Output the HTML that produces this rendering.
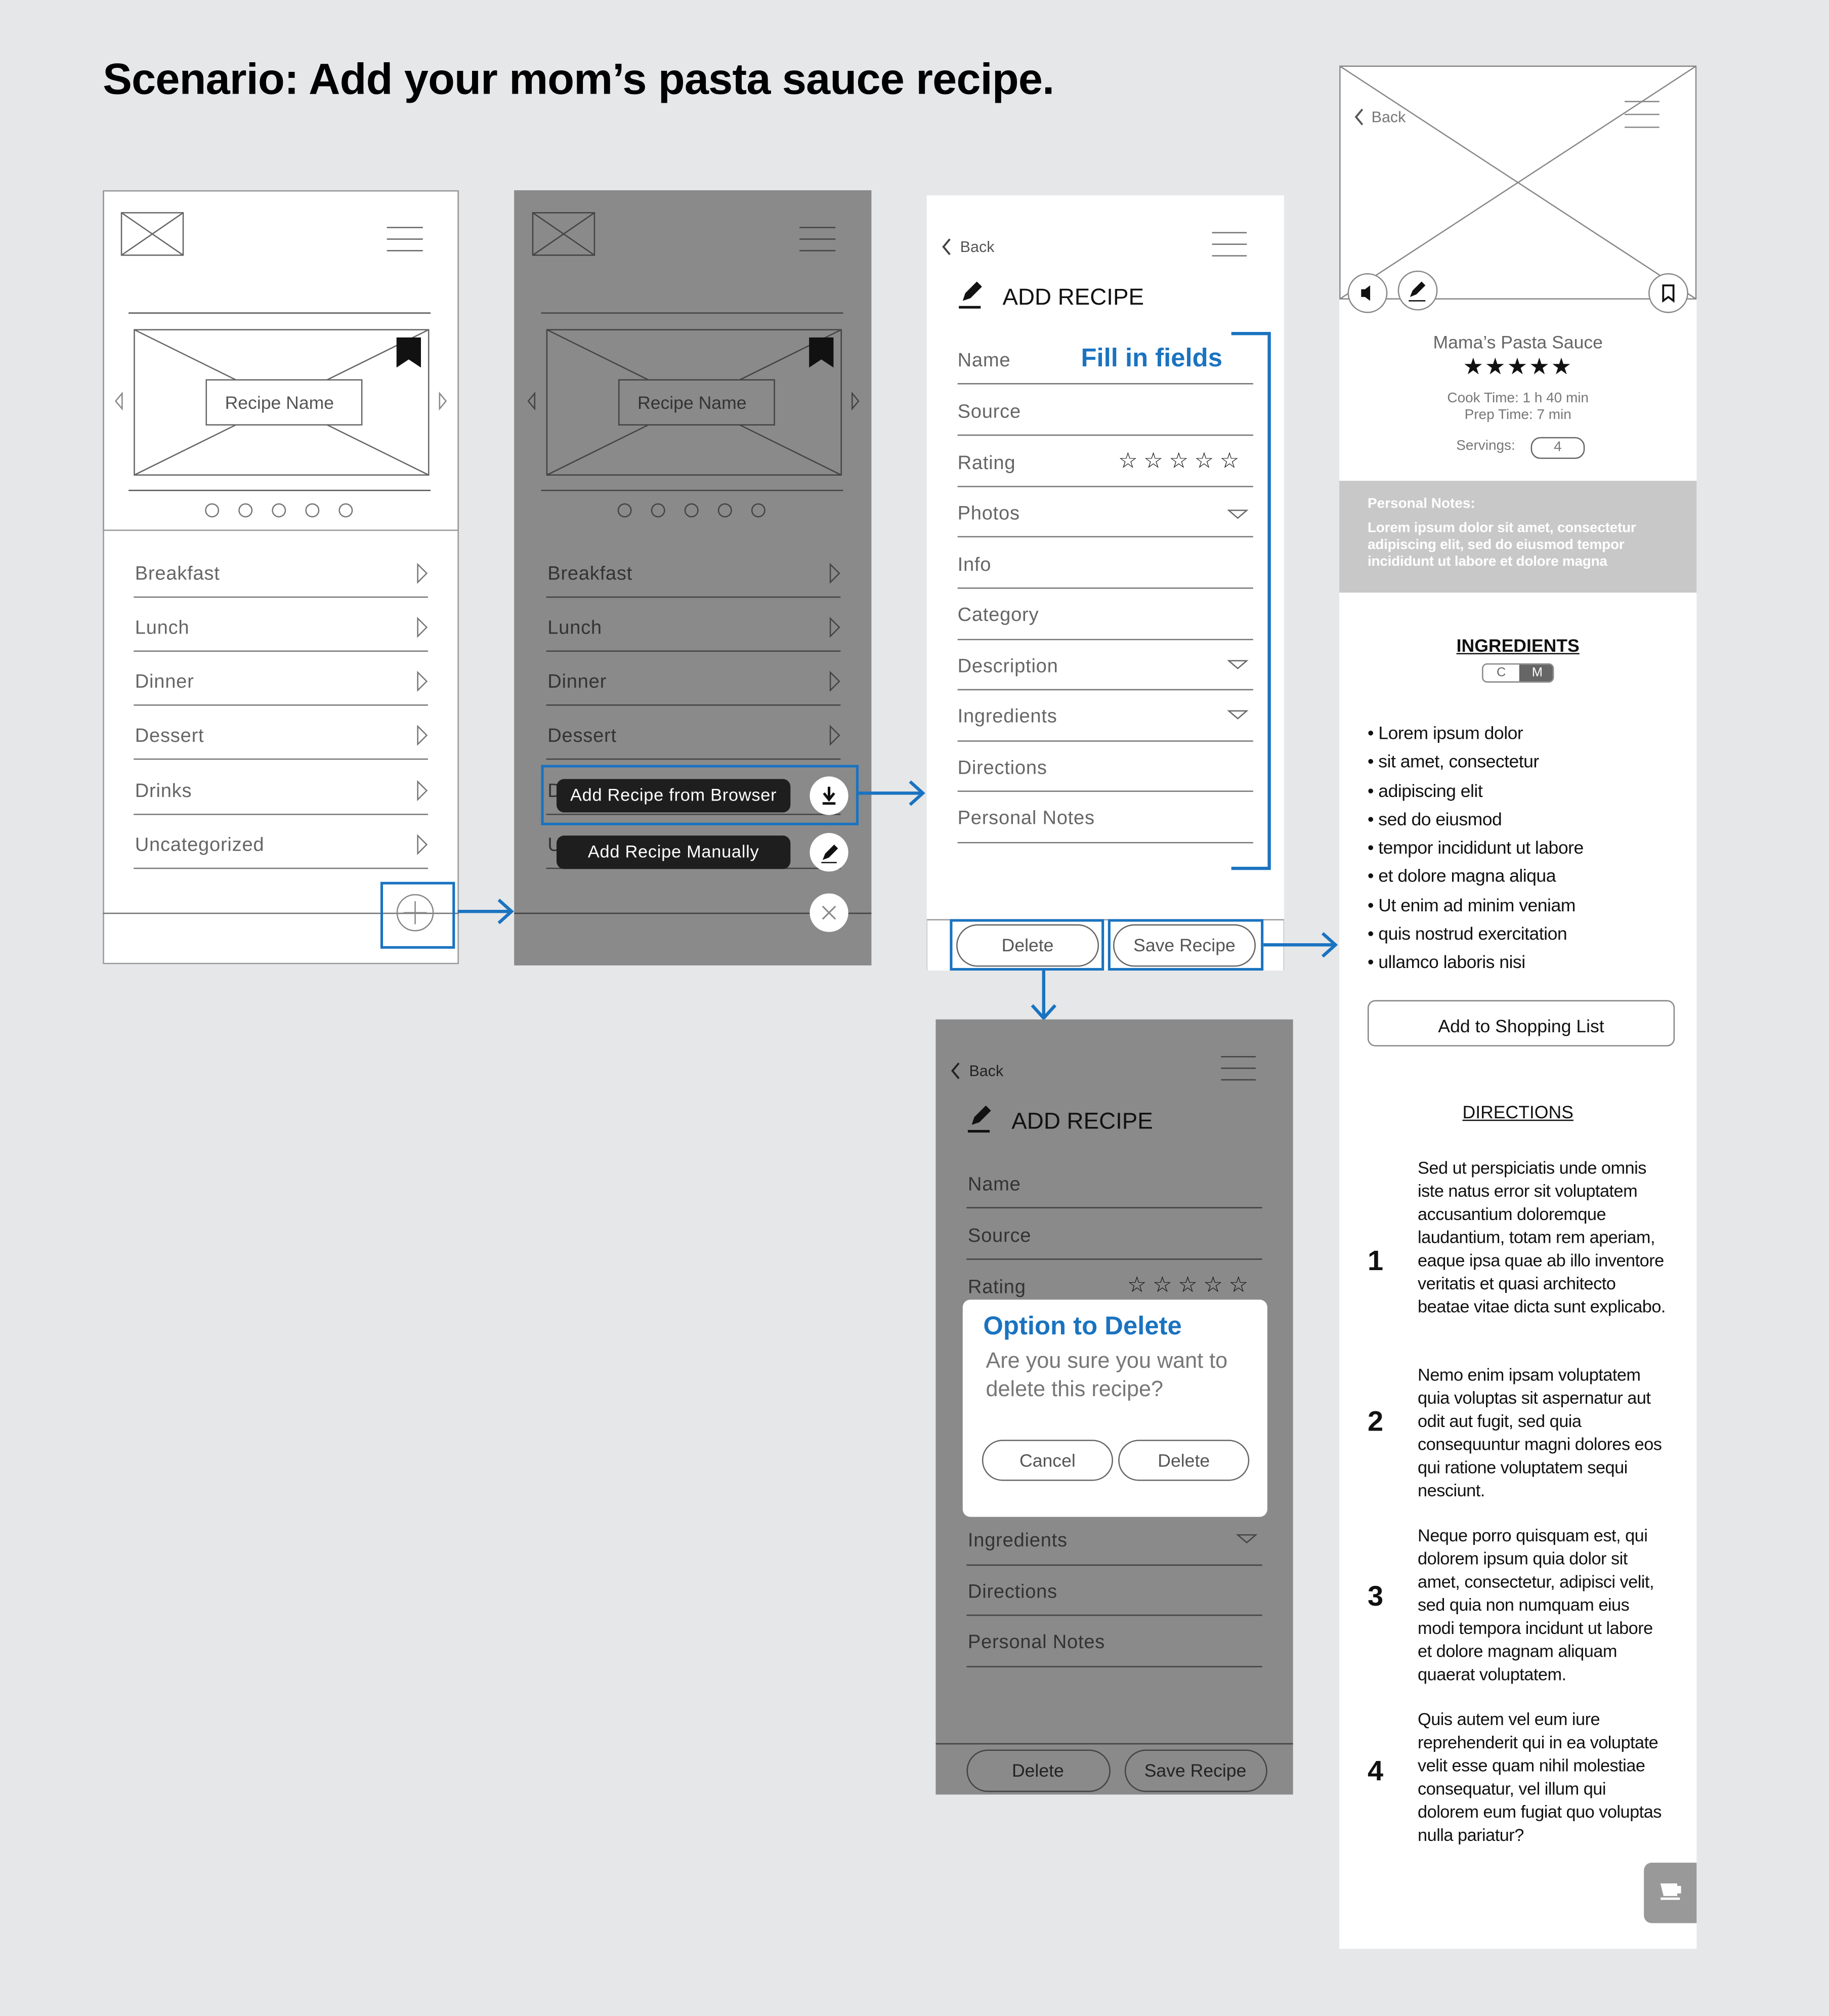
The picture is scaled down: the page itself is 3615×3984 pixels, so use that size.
<!DOCTYPE html>
<html><head><meta charset="utf-8">
<style>
html,body{margin:0;padding:0;background:#e6e7e9;}
body{width:3615px;height:3984px;overflow:hidden;position:relative;}
#w{position:absolute;left:0;top:0;width:1423px;height:1568px;transform:scale(2.5404);transform-origin:0 0;font-family:"Liberation Sans",Arial,sans-serif;}
.a{position:absolute;}
.t{position:absolute;white-space:nowrap;line-height:1;}
.lbl{position:absolute;font-size:15px;color:#666;white-space:nowrap;line-height:1;letter-spacing:.3px}
.pill{position:absolute;border:1px solid #666;border-radius:17px;text-align:center;font-size:14px;color:#555;box-sizing:border-box;}
.blue{position:absolute;border:2.5px solid #1a73c0;box-sizing:border-box;}
.p{position:absolute;left:1103px;width:196px;font-size:13.5px;line-height:18px;color:#111;letter-spacing:-0.2px}
.n{position:absolute;left:1064px;font-size:22px;font-weight:bold;color:#111;}
</style></head><body><div id="w">

<div class="t" style="left:80px;top:45px;font-size:34px;font-weight:bold;color:#000;letter-spacing:-0.3px">Scenario: Add your mom’s pasta sauce recipe.</div>

<!-- SCREEN 1 -->
<div class="a" style="left:80px;top:148px;width:277px;height:602px;background:#fff;border:1px solid #999;box-sizing:border-box"></div>
<div class="a" style="left:80px;top:148px;width:277px;height:265px;border:1px solid #999;box-sizing:border-box"></div>
<svg class="a" style="left:80px;top:148px" width="278" height="603" viewBox="80 148 278 603" fill="none" stroke="#666" stroke-width="1">
<rect x="94.5" y="165.5" width="48" height="33"/><path d="M94.5 165.5L142.5 198.5M142.5 165.5L94.5 198.5"/>
<path d="M301 177h28M301 186h28M301 195h28"/>
<path d="M100 243.5h235" stroke="#555"/>
<rect x="104.5" y="256.5" width="229" height="113"/><path d="M104.5 256.5L333.5 369.5M333.5 256.5L104.5 369.5"/>
<rect x="160.5" y="295.5" width="121" height="35" fill="#fff"/>
<path d="M309 263h18v22l-9-6-9 6z" fill="#111" stroke="#111"/>
<path d="M95 306l-5 6 5 6z M342 306l5 6-5 6z" stroke="#888"/>
<path d="M100 381.5h235" stroke="#555"/>
<g stroke="#777"><circle cx="165" cy="397" r="5"/><circle cx="191" cy="397" r="5"/><circle cx="217" cy="397" r="5"/><circle cx="243" cy="397" r="5"/><circle cx="269" cy="397" r="5"/></g>
<g stroke="#777"><path d="M104 464.5h229M104 506.5h229M104 548.5h229M104 590.5h229M104 633.5h229M104 675.5h229"/>
<path d="M325 439l7 7-7 7zM325 481l7 7-7 7zM325 523l7 7-7 7zM325 565l7 7-7 7zM325 608l7 7-7 7zM325 650l7 7-7 7z"/></g>
<path d="M80 710.5h277" stroke="#777"/>
<circle cx="323" cy="710" r="14" stroke="#888"/><path d="M323 701v18M314 710h18" stroke="#888"/>
</svg>
<div class="t" style="left:175px;top:306px;font-size:14px;color:#555">Recipe Name</div>
<div class="lbl" style="left:105px;top:439px">Breakfast</div>
<div class="lbl" style="left:105px;top:481px">Lunch</div>
<div class="lbl" style="left:105px;top:523px">Dinner</div>
<div class="lbl" style="left:105px;top:565px">Dessert</div>
<div class="lbl" style="left:105px;top:608px">Drinks</div>
<div class="lbl" style="left:105px;top:650px">Uncategorized</div>
<div class="blue" style="left:296px;top:686px;width:58px;height:52px"></div>
<svg class="a" style="left:354px;top:698px" width="48" height="22"><path d="M2 11h42M34 2l10 9-10 9" stroke="#1a73c0" stroke-width="2.5" fill="none"/></svg>

<!-- SCREEN 2 -->
<div class="a" style="left:400px;top:148px;width:278px;height:603px;background:#8a8a8a"></div>
<svg class="a" style="left:400px;top:148px" width="278" height="603" viewBox="400 148 278 603" fill="none" stroke="#444" stroke-width="1">
<rect x="414.5" y="165.5" width="48" height="33"/><path d="M414.5 165.5L462.5 198.5M462.5 165.5L414.5 198.5"/>
<path d="M622 177h28M622 186h28M622 195h28"/>
<path d="M421 243.5h235"/>
<rect x="425.5" y="256.5" width="229" height="113"/><path d="M425.5 256.5L654.5 369.5M654.5 256.5L425.5 369.5"/>
<rect x="481.5" y="295.5" width="121" height="35" fill="#8a8a8a"/>
<path d="M630 263h18v22l-9-6-9 6z" fill="#111" stroke="#111"/>
<path d="M416 306l-5 6 5 6z M663 306l5 6-5 6z"/>
<path d="M421 381.5h235"/>
<circle cx="486" cy="397" r="5"/><circle cx="512" cy="397" r="5"/><circle cx="538" cy="397" r="5"/><circle cx="564" cy="397" r="5"/><circle cx="590" cy="397" r="5"/>
<path d="M425 464.5h229M425 506.5h229M425 548.5h229M425 590.5h229M425 633.5h229M425 675.5h229"/>
<path d="M646 439l7 7-7 7zM646 481l7 7-7 7zM646 523l7 7-7 7zM646 565l7 7-7 7z"/>
<path d="M400 710.5h278"/>
</svg>
<div class="lbl" style="left:426px;top:439px;color:#333">Breakfast</div>
<div class="lbl" style="left:426px;top:481px;color:#333">Lunch</div>
<div class="lbl" style="left:426px;top:523px;color:#333">Dinner</div>
<div class="lbl" style="left:426px;top:565px;color:#333">Dessert</div>
<div class="lbl" style="left:426px;top:608px;color:#333">Drinks</div>
<div class="lbl" style="left:426px;top:650px;color:#333">Uncategorized</div>
<div class="t" style="left:496px;top:306px;font-size:14px;color:#333">Recipe Name</div>
<div class="a" style="left:433px;top:606px;width:182px;height:26px;border-radius:6px;background:#1e1e1e;color:#fff;font-size:13.5px;line-height:26px;text-align:center;letter-spacing:.3px">Add Recipe from Browser</div>
<div class="a" style="left:433px;top:650px;width:182px;height:26px;border-radius:6px;background:#1e1e1e;color:#fff;font-size:13.5px;line-height:26px;text-align:center;letter-spacing:.3px">Add Recipe Manually</div>
<svg class="a" style="left:628px;top:602px" width="36" height="126" viewBox="628 602 36 126">
<circle cx="645" cy="619" r="15" fill="#fff"/><path d="M645 612v9M641 617l4 5 4-5M640 625h10" stroke="#111" stroke-width="2" fill="none"/>
<circle cx="645" cy="663" r="15" fill="#fff"/><path d="M640 669l2-5 7-7 3 3-7 7z" fill="#111"/><path d="M639 671h12" stroke="#111"/>
<circle cx="645" cy="710" r="15" fill="#fff"/><path d="M640 705l10 10M650 705l-10 10" stroke="#888" stroke-width="1.2"/>
</svg>
<div class="blue" style="left:421px;top:595px;width:247px;height:47px"></div>
<svg class="a" style="left:666px;top:606px" width="56" height="22"><path d="M2 11h50M42 2l10 9-10 9" stroke="#1a73c0" stroke-width="2.5" fill="none"/></svg>

<!-- SCREEN 3 -->
<div class="a" style="left:721px;top:152px;width:278px;height:603px;background:#fff"></div>
<svg class="a" style="left:721px;top:152px" width="278" height="603" viewBox="721 152 278 603" fill="none" stroke="#777" stroke-width="1">
<path d="M739 186l-5 6 5 6" stroke="#444" stroke-width="1.5"/>
<path d="M943 181h27M943 190h27M943 199h27"/>
<path d="M749 234l2-6 9-9 4 4-9 9z" fill="#111" stroke="none"/><path d="M746 239h17" stroke="#111" stroke-width="2"/>
<path d="M745 298.5h230M745 338.5h230M745 378.5h230M745 417.5h230M745 457.5h230M745 497.5h230M745 536.5h230M745 576.5h230M745 615.5h230M745 655.5h230"/>
<path d="M956 397l7 6 7-6z M956 514l7 6 7-6z M956 553l7 6 7-6z" stroke="#666"/>
<path d="M721 715.5h278" stroke="#999"/>
<path d="M721 715.5v40M999 715.5v40M721 755.5h278" stroke="#bbb"/>
</svg>
<div class="t" style="left:747px;top:186px;font-size:12px;color:#555">Back</div>
<div class="t" style="left:780px;top:222px;font-size:18px;color:#111">ADD RECIPE</div>
<div class="lbl" style="left:745px;top:273px">Name</div>
<div class="t" style="left:841px;top:269px;font-size:20px;font-weight:bold;color:#1a73c0">Fill in fields</div>
<div class="lbl" style="left:745px;top:353px">Rating</div>
<div class="lbl" style="left:745px;top:313px">Source</div>
<div class="t" style="left:870px;top:350px;font-size:17px;color:#111;letter-spacing:4.5px">☆☆☆☆☆</div>
<div class="lbl" style="left:745px;top:392px">Photos</div>
<div class="lbl" style="left:745px;top:432px">Info</div>
<div class="lbl" style="left:745px;top:471px">Category</div>
<div class="lbl" style="left:745px;top:511px">Description</div>
<div class="lbl" style="left:745px;top:550px">Ingredients</div>
<div class="lbl" style="left:745px;top:590px">Directions</div>
<div class="lbl" style="left:745px;top:629px">Personal Notes</div>
<svg class="a" style="left:955px;top:257px" width="36" height="423"><path d="M3 2.5h29.5v416H3" stroke="#1a73c0" stroke-width="2.5" fill="none"/></svg>
<div class="pill" style="left:744px;top:719px;width:111px;height:33px;line-height:31px">Delete</div>
<div class="pill" style="left:866px;top:719px;width:111px;height:33px;line-height:31px">Save Recipe</div>
<div class="blue" style="left:739px;top:715px;width:120px;height:40px"></div>
<div class="blue" style="left:862px;top:715px;width:121px;height:40px"></div>
<svg class="a" style="left:981px;top:724px" width="62" height="22"><path d="M2 11h56M48 2l10 9-10 9" stroke="#1a73c0" stroke-width="2.5" fill="none"/></svg>
<svg class="a" style="left:800px;top:754px" width="24" height="42"><path d="M12 0v38M3 28l9 10 9-10" stroke="#1a73c0" stroke-width="2.5" fill="none"/></svg>

<!-- SCREEN 4 -->
<div class="a" style="left:728px;top:793px;width:278px;height:603px;background:#8a8a8a"></div>
<svg class="a" style="left:728px;top:793px" width="278" height="603" viewBox="728 793 278 603" fill="none" stroke="#444" stroke-width="1">
<path d="M746 827l-5 6 5 6" stroke="#222" stroke-width="1.5"/>
<path d="M950 822h27M950 831h27M950 840h27"/>
<path d="M756 875l2-6 9-9 4 4-9 9z" fill="#111" stroke="none"/><path d="M753 880h17" stroke="#111" stroke-width="2"/>
<path d="M752 939.5h230M752 979.5h230M752 1217.5h230M752 1256.5h230M752 1296.5h230"/>
<path d="M963 1194l7 6 7-6z"/>
<path d="M728 1356.5h278"/>
<rect x="752.5" y="1361.5" width="111" height="32" rx="16"/><rect x="875.5" y="1361.5" width="110" height="32" rx="16"/>
</svg>
<div class="t" style="left:754px;top:827px;font-size:12px;color:#222">Back</div>
<div class="t" style="left:787px;top:863px;font-size:18px;color:#111">ADD RECIPE</div>
<div class="lbl" style="left:753px;top:914px;color:#333">Name</div>
<div class="lbl" style="left:753px;top:954px;color:#333">Source</div>
<div class="lbl" style="left:753px;top:994px;color:#333">Rating</div>
<div class="t" style="left:877px;top:991px;font-size:17px;color:#111;letter-spacing:4.5px">☆☆☆☆☆</div>
<div class="lbl" style="left:753px;top:1191px;color:#333">Ingredients</div>
<div class="lbl" style="left:753px;top:1231px;color:#333">Directions</div>
<div class="lbl" style="left:753px;top:1270px;color:#333">Personal Notes</div>
<div class="t" style="left:752px;top:1370px;width:111px;text-align:center;font-size:14px;color:#222">Delete</div>
<div class="t" style="left:875px;top:1370px;width:110px;text-align:center;font-size:14px;color:#222">Save Recipe</div>
<div class="a" style="left:749px;top:1011px;width:237px;height:169px;background:#fff;border-radius:6px"></div>
<div class="t" style="left:765px;top:1022px;font-size:20px;font-weight:bold;color:#1a73c0">Option to Delete</div>
<div class="a" style="left:767px;top:1048px;width:210px;font-size:17px;line-height:22px;color:#777">Are you sure you want to delete this recipe?</div>
<div class="pill" style="left:764px;top:1120px;width:102px;height:32px;line-height:30px">Cancel</div>
<div class="pill" style="left:870px;top:1120px;width:102px;height:32px;line-height:30px">Delete</div>

<!-- SCREEN 5 -->
<div class="a" style="left:1042px;top:51px;width:278px;height:1465px;background:#fff"></div>
<svg class="a" style="left:1042px;top:51px" width="278" height="320" viewBox="1042 51 278 320" fill="none" stroke="#888" stroke-width="1">
<rect x="1042.5" y="51.5" width="277" height="181"/><path d="M1042.5 51.5L1319.5 232.5M1319.5 51.5L1042.5 232.5"/>
<path d="M1060 85l-5 6 5 6" stroke="#555" stroke-width="1.5"/>
<path d="M1264 79h27M1264 89h27M1264 99h27"/>
<circle cx="1064" cy="228" r="15" fill="#fff"/><path d="M1059 225h3l4-3v12l-4-3h-3z" fill="#111" stroke="none"/>
<circle cx="1103" cy="226" r="15" fill="#fff"/><path d="M1097 231l2-5 7-7 3 3-7 7z" fill="#111" stroke="none"/><path d="M1096 234h13" stroke="#111"/>
<circle cx="1298" cy="228" r="15" fill="#fff"/><path d="M1294 222h8v12l-4-3-4 3z" stroke="#111" stroke-width="1.5"/>
<rect x="1191.5" y="340.5" width="41" height="16" rx="7" stroke="#666"/>
</svg>
<div class="t" style="left:1067px;top:85px;font-size:12px;color:#777">Back</div>
<div class="t" style="left:1042px;top:259px;width:278px;text-align:center;font-size:14px;color:#666">Mama’s Pasta Sauce</div>
<div class="t" style="left:1042px;top:276px;width:278px;text-align:center;font-size:18px;color:#111;letter-spacing:1px">★★★★★</div>
<div class="t" style="left:1042px;top:305px;width:278px;text-align:center;font-size:11px;color:#777">Cook Time: 1 h 40 min</div>
<div class="t" style="left:1042px;top:318px;width:278px;text-align:center;font-size:11px;color:#777">Prep Time: 7 min</div>
<div class="t" style="left:1133px;top:342px;font-size:11px;color:#777">Servings:</div>
<div class="t" style="left:1191px;top:343px;width:42px;text-align:center;font-size:11px;color:#777">4</div>
<div class="a" style="left:1042px;top:374px;width:278px;height:87px;background:#c8c8c8"></div>
<div class="t" style="left:1064px;top:387px;font-size:11px;color:#fff;font-weight:bold">Personal Notes:</div>
<div class="a" style="left:1064px;top:405px;width:232px;font-size:11px;line-height:13px;color:#fff;font-weight:bold;letter-spacing:-0.1px">Lorem ipsum dolor sit amet, consectetur adipiscing elit, sed do eiusmod tempor incididunt ut labore et dolore magna</div>
<div class="t" style="left:1042px;top:495px;width:278px;text-align:center;font-size:14px;font-weight:bold;color:#111;text-decoration:underline">INGREDIENTS</div>
<div class="a" style="left:1153px;top:516px;width:56px;height:15px;border:1px solid #888;border-radius:4px;box-sizing:border-box;overflow:hidden;font-size:10px;line-height:13px">
<span style="position:absolute;left:0;width:28px;text-align:center;color:#666">C</span><span style="position:absolute;left:28px;width:28px;height:15px;background:#666;text-align:center;color:#fff">M</span></div>
<div class="a" style="left:1064px;top:559px;font-size:14px;line-height:22.3px;color:#111;letter-spacing:-0.2px">
• Lorem ipsum dolor<br>• sit amet, consectetur<br>• adipiscing elit<br>• sed do eiusmod<br>• tempor incididunt ut labore<br>• et dolore magna aliqua<br>• Ut enim ad minim veniam<br>• quis nostrud exercitation<br>• ullamco laboris nisi</div>
<div class="a" style="left:1064px;top:778px;width:239px;height:36px;border:1px solid #888;border-radius:6px;box-sizing:border-box;text-align:center;line-height:38px;font-size:14px;color:#111">Add to Shopping List</div>
<div class="t" style="left:1042px;top:858px;width:278px;text-align:center;font-size:14px;color:#111;text-decoration:underline">DIRECTIONS</div>
<div class="p" style="top:900px">Sed ut perspiciatis unde omnis iste natus error sit voluptatem accusantium doloremque laudantium, totam rem aperiam, eaque ipsa quae ab illo inventore veritatis et quasi architecto beatae vitae dicta sunt explicabo.</div>
<div class="n" style="top:968px">1</div>
<div class="p" style="top:1061px">Nemo enim ipsam voluptatem quia voluptas sit aspernatur aut odit aut fugit, sed quia consequuntur magni dolores eos qui ratione voluptatem sequi nesciunt.</div>
<div class="n" style="top:1093px">2</div>
<div class="p" style="top:1186px">Neque porro quisquam est, qui dolorem ipsum quia dolor sit amet, consectetur, adipisci velit, sed quia non numquam eius modi tempora incidunt ut labore et dolore magnam aliquam quaerat voluptatem.</div>
<div class="n" style="top:1229px">3</div>
<div class="p" style="top:1329px">Quis autem vel eum iure reprehenderit qui in ea voluptate velit esse quam nihil molestiae consequatur, vel illum qui dolorem eum fugiat quo voluptas nulla pariatur?</div>
<div class="n" style="top:1365px">4</div>
<div class="a" style="left:1279px;top:1449px;width:41px;height:47px;background:#999;border-radius:6px 0 0 6px"></div>
<svg class="a" style="left:1290px;top:1463px" width="20" height="18"><path d="M3 3h11v8H5z M14 5h3v4h-3 M2 14h15" stroke="#fff" stroke-width="1.8" fill="#fff"/></svg>

</div></body></html>
